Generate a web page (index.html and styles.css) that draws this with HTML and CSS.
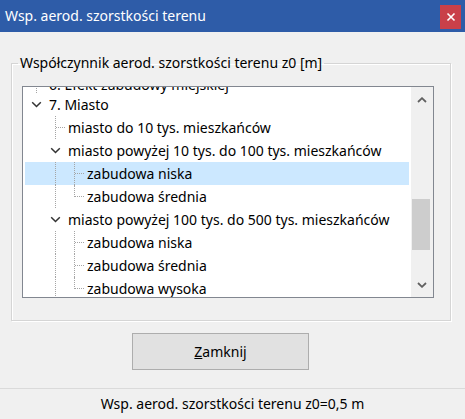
FILE: index.html
```html
<!DOCTYPE html>
<html lang="pl">
<head>
<meta charset="utf-8">
<title>Wsp. aerod. szorstkości terenu</title>
<link rel="stylesheet" href="styles.css">
</head>
<body>
<div class="window">
  <div class="titlebar">
    <span class="title">Wsp. aerod. szorstkości terenu</span>
    <button class="close" aria-label="Zamknij">
      <svg width="10" height="10" viewBox="0 0 10 10"><path d="M1.5 1.5 L8.5 8.5 M8.5 1.5 L1.5 8.5" stroke="#fff" stroke-width="1.6" fill="none"/></svg>
    </button>
  </div>
  <div class="content">
    <fieldset class="group">
      <legend>Współczynnik aerod. szorstkości terenu z0 [m]</legend>
      <div class="tree">
        <div class="tree-view">
          <div class="rows">
            <div class="row clipped">
              <span class="cell line-full"></span>
              <span class="label">6. Efekt zabudowy miejskiej</span>
            </div>
            <div class="row">
              <span class="cell line-top chev"><svg width="11" height="7" viewBox="0 0 11 7"><path d="M1.2 1.2 L5.5 5.5 L9.8 1.2" stroke="#333" stroke-width="1.5" fill="none"/></svg></span>
              <span class="label">7. Miasto</span>
            </div>
            <div class="row">
              <span class="cell"></span>
              <span class="cell line-full branch"></span>
              <span class="label">miasto do 10 tys. mieszkańców</span>
            </div>
            <div class="row">
              <span class="cell"></span>
              <span class="cell line-full chev"><svg width="11" height="7" viewBox="0 0 11 7"><path d="M1.2 1.2 L5.5 5.5 L9.8 1.2" stroke="#333" stroke-width="1.5" fill="none"/></svg></span>
              <span class="label">miasto powyżej 10 tys. do 100 tys. mieszkańców</span>
            </div>
            <div class="row selected">
              <span class="cell"></span>
              <span class="cell line-full"></span>
              <span class="cell line-full branch"></span>
              <span class="label">zabudowa niska</span>
            </div>
            <div class="row">
              <span class="cell"></span>
              <span class="cell line-full"></span>
              <span class="cell line-top branch"></span>
              <span class="label">zabudowa średnia</span>
            </div>
            <div class="row">
              <span class="cell"></span>
              <span class="cell line-full chev"><svg width="11" height="7" viewBox="0 0 11 7"><path d="M1.2 1.2 L5.5 5.5 L9.8 1.2" stroke="#333" stroke-width="1.5" fill="none"/></svg></span>
              <span class="label">miasto powyżej 100 tys. do 500 tys. mieszkańców</span>
            </div>
            <div class="row">
              <span class="cell"></span>
              <span class="cell line-full"></span>
              <span class="cell line-full branch"></span>
              <span class="label">zabudowa niska</span>
            </div>
            <div class="row">
              <span class="cell"></span>
              <span class="cell line-full"></span>
              <span class="cell line-full branch"></span>
              <span class="label">zabudowa średnia</span>
            </div>
            <div class="row">
              <span class="cell"></span>
              <span class="cell line-full"></span>
              <span class="cell line-top branch"></span>
              <span class="label">zabudowa wysoka</span>
            </div>
          </div>
        </div>
        <div class="scrollbar">
          <div class="sb-btn">
            <svg width="10" height="6" viewBox="0 0 10 6"><path d="M1 5 L5 1.2 L9 5" stroke="#606060" stroke-width="1.8" fill="none"/></svg>
          </div>
          <div class="sb-track">
            <div class="sb-thumb"></div>
          </div>
          <div class="sb-btn">
            <svg width="10" height="6" viewBox="0 0 10 6"><path d="M1 1 L5 4.8 L9 1" stroke="#606060" stroke-width="1.8" fill="none"/></svg>
          </div>
        </div>
      </div>
    </fieldset>
    <div class="actions">
      <button class="btn"><span class="ul">Z</span>amknij</button>
    </div>
  </div>
  <div class="statusbar">Wsp. aerod. szorstkości terenu z0=0,5 m</div>
</div>
</body>
</html>
```

FILE: styles.css
```css
* { box-sizing: border-box; }
html, body { margin: 0; padding: 0; }
body {
  width: 465px;
  height: 419px;
  overflow: hidden;
  background: #f0f0f0;
  font-family: "Noto Sans", "Open Sans", sans-serif;
  font-size: 14px;
  color: #000;
}
.window {
  display: flex;
  flex-direction: column;
  height: 419px;
}
.titlebar {
  height: 32px;
  background: #2e5ca8;
  display: flex;
  align-items: center;
  justify-content: space-between;
  padding: 0 4px 0 5px;
}
.title {
  color: #fff;
  font-size: 14px;
  line-height: 32px;
}
.close {
  width: 21px;
  height: 24px;
  margin-top: 1px;
  background: #c94049;
  border: none;
  padding: 0;
  display: flex;
  align-items: center;
  justify-content: center;
}
.content {
  flex: 1;
  padding: 21px 14px 0 11px;
}
.group {
  margin: 0;
  border: 1px solid #d5d5d5;
  box-shadow: inset 1px 1px 0 #fff, 1px 1px 0 #fff;
  padding: 13px 16px 22px 10px;
  min-width: 0;
}
.group legend {
  padding: 0 2px;
  margin-left: -4px;
  line-height: 20px;
  font-size: 14px;
  color: #000;
}
.tree {
  height: 212px;
  border: 1px solid #828790;
  background: #fff;
  display: flex;
}
.tree-view {
  flex: 1;
  overflow: hidden;
  padding: 0 2px;
}
.rows {
  margin-top: -17px;
}
.row {
  height: 23px;
  display: flex;
  align-items: stretch;
  padding-left: 2px;
}
.row.selected { background: #cce8ff; }
.row.clipped .label { line-height: 29px; }
.cell {
  width: 19px;
  flex: none;
  position: relative;
  display: flex;
  align-items: center;
  justify-content: center;
}
.line-full::before,
.line-top::before {
  content: "";
  position: absolute;
  left: 9px;
  top: 0;
  bottom: 0;
  border-left: 1px dotted #a5a5a5;
}
.line-top::before { bottom: 11px; }
.branch::after {
  content: "";
  position: absolute;
  left: 10px;
  width: 9px;
  top: 11px;
  border-top: 1px dotted #a5a5a5;
}
.chev::before { display: none; }
.chev svg { position: relative; }
.label {
  margin-left: 3px;
  line-height: 23px;
  white-space: nowrap;
}
.scrollbar {
  width: 22px;
  flex: none;
  background: #f0f0f0;
  display: flex;
  flex-direction: column;
}
.sb-btn {
  height: 25px;
  display: flex;
  align-items: center;
  justify-content: center;
}
.sb-track {
  flex: 1;
  padding-top: 87px;
  padding-left: 1px;
}
.sb-thumb {
  width: 18px;
  height: 51px;
  background: #cdcdcd;
}
.actions {
  display: flex;
  justify-content: flex-start;
  padding: 12px 0 0 121px;
}
.btn {
  width: 177px;
  height: 37px;
  background: #e1e1e1;
  border: 1px solid #adadad;
  font-family: inherit;
  font-size: 14px;
  color: #000;
  padding: 0;
}
.ul { text-decoration: underline; }
.statusbar {
  height: 31px;
  border-top: 1px solid #dadada;
  text-align: center;
  line-height: 30px;
  font-size: 14px;
  color: #000;
}
```
